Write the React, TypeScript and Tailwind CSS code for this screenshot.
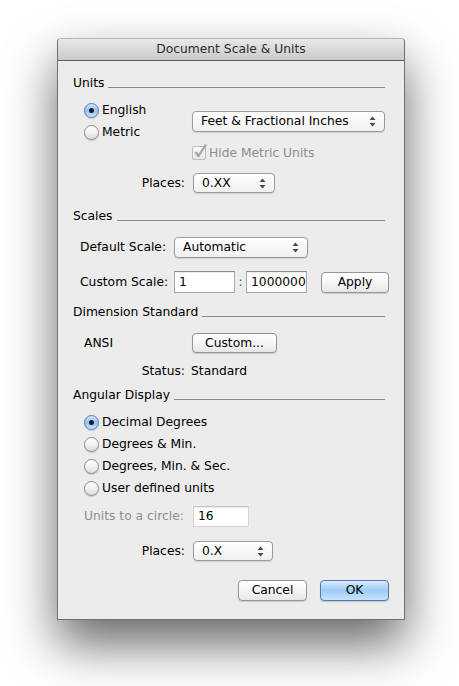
import type { ReactNode } from 'react'

const font = "font-['Lucida_Grande','DejaVu_Sans',sans-serif]"

// Section heading with the etched rule running to the right edge
function Section({ title, className = '' }: { title: string; className?: string }) {
  return (
    <div className={`flex items-end h-[16px] ${className}`}>
      <span className="leading-[16px] text-black">{title}</span>
      <div className="flex-1 ml-[4px] mb-[3px] h-px bg-[#8a8a8a]" />
    </div>
  )
}

function Radio({ checked = false, label }: { checked?: boolean; label: string }) {
  return (
    <div className="flex items-center h-[22px]">
      <span
        className={
          checked
            ? 'w-[15px] h-[15px] rounded-full border border-[#4f7fb4] bg-gradient-to-b from-[#cfe5fb] via-[#94c3f1] to-[#c5e2fc] flex items-center justify-center shadow-[0_1px_1px_rgba(0,0,0,0.15)]'
            : 'w-[15px] h-[15px] rounded-full border border-[#8b8b8b] bg-gradient-to-b from-[#ffffff] via-[#f2f2f2] to-[#dcdcdc] shadow-[0_1px_1px_rgba(0,0,0,0.15)]'
        }
      >
        {checked && <span className="w-[5px] h-[5px] rounded-full bg-[#1b1b1b]" />}
      </span>
      <span className="ml-[3px] text-black">{label}</span>
    </div>
  )
}

function Arrows() {
  return (
    <svg width="7" height="11" viewBox="0 0 7 11" className="shrink-0">
      <path d="M3.5 0.5 L6.5 4 L0.5 4 Z" fill="#4a4a4a" />
      <path d="M3.5 10.5 L6.5 7 L0.5 7 Z" fill="#4a4a4a" />
    </svg>
  )
}

function Popup({ value, className = '' }: { value: string; className?: string }) {
  return (
    <div
      className={`shrink-0 flex items-center justify-between pl-[8px] pr-[8px] rounded-[4px] border border-[#9b9b9b] bg-gradient-to-b from-[#ffffff] to-[#f0f0f0] shadow-[0_1px_1px_rgba(0,0,0,0.12)] ${className}`}
    >
      <span className="text-black">{value}</span>
      <Arrows />
    </div>
  )
}

function Button({ children, className = '', primary = false }: { children: ReactNode; className?: string; primary?: boolean }) {
  return (
    <div
      className={
        primary
          ? `shrink-0 flex items-center justify-center rounded-[4px] border border-[#5379ae] bg-gradient-to-b from-[#d6eafc] via-[#9dcbf4] to-[#c6e4fc] shadow-[0_1px_1px_rgba(0,0,0,0.18)] text-black ${className}`
          : `shrink-0 flex items-center justify-center rounded-[4px] border border-[#959595] bg-gradient-to-b from-[#ffffff] via-[#f6f6f6] to-[#e6e6e6] shadow-[0_1px_1px_rgba(0,0,0,0.15)] text-black ${className}`
      }
    >
      {children}
    </div>
  )
}

function Field({ value, className = '' }: { value: string; className?: string }) {
  return (
    <div className={`shrink-0 flex items-center pl-[4px] bg-white border border-[#a9a9a9] border-t-[#8c8c8c] shadow-[inset_0_1px_1px_rgba(0,0,0,0.08)] text-black ${className}`}>
      {value}
    </div>
  )
}

export default function App() {
  return (
    <div className={`w-[459px] h-[686px] bg-white pt-[38px] pl-[57px] text-[12.3px] ${font}`}>
      <div className="w-[348px] h-[582px] flex flex-col border border-[#6f6f6f] border-t-[#b5b5b5] rounded-t-[4px] bg-[#ececec] shadow-[0_24px_50px_rgba(0,0,0,0.6)]">
        {/* title bar */}
        <div className="h-[22px] shrink-0 flex items-center justify-center rounded-t-[4px] bg-gradient-to-b from-[#e9e9e9] to-[#c9c9c9] border-b border-[#5d5d5d] text-[#2e2e2e]">
          Document Scale &amp; Units
        </div>

        <div className="flex flex-col pl-[15px] pr-[19px]">
          {/* Units */}
          <Section title="Units" className="mt-[14px]" />
          <div className="flex mt-[8px]">
            <div className="flex flex-col ml-[11px] w-[108px]">
              <Radio checked label="English" />
              <Radio label="Metric" />
            </div>
            <div className="flex flex-col">
              <Popup value="Feet & Fractional Inches" className="mt-[12px] w-[193px] h-[21px]" />
              <div className="flex items-center h-[18px] mt-[12px] text-[#8d8d8d]">
                <span className="relative w-[14px] h-[14px] border border-[#bdbdbd] rounded-[2px] bg-gradient-to-b from-[#fbfbfb] to-[#e7e7e7]">
                  <svg width="16" height="16" viewBox="0 0 16 16" className="absolute left-[0px] top-[-4px]">
                    <path d="M2.5 9 L5.5 13 L13 1.5" fill="none" stroke="#a3a3a3" strokeWidth="2.2" strokeLinejoin="round" />
                  </svg>
                </span>
                <span className="ml-[3px]">Hide Metric Units</span>
              </div>
            </div>
          </div>
          <div className="flex items-center mt-[11px]">
            <span className="shrink-0 w-[112px] text-right text-black">Places:</span>
            <Popup value="0.XX" className="ml-[8px] w-[82px] h-[20px]" />
          </div>

          {/* Scales */}
          <Section title="Scales" className="mt-[15px]" />
          <div className="flex items-center mt-[13px] ml-[7px]">
            <span className="shrink-0 w-[94px] text-black">Default Scale:</span>
            <Popup value="Automatic" className="w-[134px] h-[21px]" />
          </div>
          <div className="flex items-center mt-[13px] ml-[7px]">
            <span className="shrink-0 w-[94px] text-black">Custom Scale:</span>
            <Field value="1" className="w-[61px] h-[22px]" />
            <span className="shrink-0 w-[11px] text-center text-[#555]">:</span>
            <Field value="1000000" className="w-[61px] h-[22px]" />
            <Button className="ml-[14px] w-[68px] h-[21px]">Apply</Button>
          </div>

          {/* Dimension Standard */}
          <Section title="Dimension Standard" className="mt-[11px]" />
          <div className="flex items-center mt-[13px]">
            <span className="shrink-0 w-[119px] pl-[11px] text-black">ANSI</span>
            <Button className="w-[85px] h-[20px]">Custom...</Button>
          </div>
          <div className="flex items-center h-[16px] mt-[10px]">
            <span className="shrink-0 w-[112px] text-right text-black">Status:</span>
            <span className="ml-[6px] text-black">Standard</span>
          </div>

          {/* Angular Display */}
          <Section title="Angular Display" className="mt-[8px]" />
          <div className="flex flex-col mt-[8px] ml-[11px]">
            <Radio checked label="Decimal Degrees" />
            <Radio label="Degrees & Min." />
            <Radio label="Degrees, Min. & Sec." />
            <Radio label="User defined units" />
          </div>
          <div className="flex items-center mt-[7px]">
            <span className="shrink-0 w-[113px] pl-[11px] text-[#8d8d8d]">Units to a circle:</span>
            <Field value="16" className="ml-[7px] w-[56px] h-[21px] border-[#d6d6d6] border-t-[#c4c4c4]" />
          </div>
          <div className="flex items-center mt-[14px]">
            <span className="shrink-0 w-[112px] text-right text-black">Places:</span>
            <Popup value="0.X" className="ml-[8px] w-[80px] h-[20px]" />
          </div>

          {/* dialog buttons */}
          <div className="flex justify-end mt-[19px] mr-[-4px]">
            <Button className="w-[69px] h-[21px]">Cancel</Button>
            <Button primary className="ml-[13px] w-[69px] h-[21px]">OK</Button>
          </div>
        </div>
      </div>
    </div>
  )
}
